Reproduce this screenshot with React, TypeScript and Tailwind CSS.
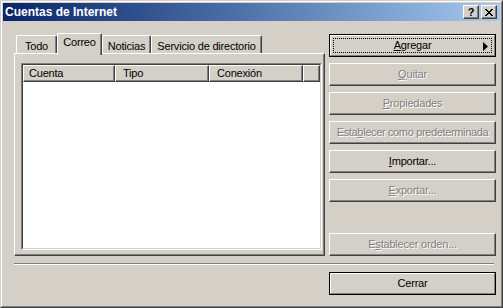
import React from "react";

const raised =
  "border border-t-white border-l-white border-r-[#404040] border-b-[#404040] shadow-[inset_-1px_-1px_0_#808080]";

function Btn({
  children,
  disabled,
  isDefault,
  focus,
  arrow,
  className = "",
}: {
  children: React.ReactNode;
  disabled?: boolean;
  isDefault?: boolean;
  focus?: boolean;
  arrow?: boolean;
  className?: string;
}) {
  const text = disabled
    ? "text-[#808080] [text-shadow:1px_1px_0_#ffffff]"
    : "text-black";
  const inner = (
    <div
      className={`relative h-full w-full flex items-center justify-center bg-[#d4d0c8] ${
        isDefault
          ? "border border-t-white border-l-white border-r-[#808080] border-b-[#808080]"
          : raised
      } ${text}`}
    >
      {focus && (
        <div className="absolute inset-[2px] border border-dotted border-black" />
      )}
      <span className="leading-none whitespace-nowrap">{children}</span>
      {arrow && (
        <svg
          className="absolute right-[6px] top-[6px]"
          width="5"
          height="9"
          viewBox="0 0 5 9"
        >
          <polygon points="0,0 5,4.5 0,9" fill="#000" />
        </svg>
      )}
    </div>
  );
  return (
    <div
      className={`h-[23px] w-[167px] ${
        isDefault ? "border border-black" : ""
      } ${className}`}
    >
      {inner}
    </div>
  );
}

function Tab({
  label,
  w,
  selected,
  className = "",
}: {
  label: string;
  w: string;
  selected?: boolean;
  className?: string;
}) {
  return (
    <div
      className={`${w} ${
        selected
          ? "h-[22px] mb-[-2px] relative z-10 pt-[3px]"
          : "h-[18px] pt-[5px]"
      } bg-[#d4d0c8] border-t border-l border-t-white border-l-white border-r border-r-[#404040] shadow-[inset_-1px_0_0_#808080] rounded-tl-[2px] rounded-tr-[2px] flex justify-center ${className}`}
    >
      <span className="leading-none whitespace-nowrap">{label}</span>
    </div>
  );
}

export default function App() {
  return (
    <div className="w-[503px] h-[308px] bg-[#d4d0c8] border border-t-[#d4d0c8] border-l-[#d4d0c8] border-r-[#404040] border-b-[#404040] font-['Liberation_Sans',Arial,sans-serif] text-[11px] tracking-[-0.2px] text-black select-none">
      <div className="h-full border border-t-white border-l-white border-r-[#808080] border-b-[#808080] p-[1px] flex flex-col">
        {/* title bar */}
        <div className="h-[18px] bg-linear-to-r from-[#0a246a] to-[#a6caf0] flex items-center justify-between pl-[2px] pr-[3px]">
          <span className="text-white font-bold text-[12px] tracking-normal leading-none">
            Cuentas de Internet
          </span>
          <div className="flex gap-[2px]">
            <div className={`w-[16px] h-[14px] bg-[#d4d0c8] ${raised} flex items-center justify-center`}>
              <span className="font-bold text-[11px] leading-none text-black">?</span>
            </div>
            <div className={`w-[16px] h-[14px] bg-[#d4d0c8] ${raised} flex items-center justify-center`}>
              <svg width="8" height="7" viewBox="0 0 8 7">
                <path
                  d="M0 0h2v1H0zM6 0h2v1H6zM1 1h2v1H1zM5 1h2v1H5zM2 2h4v1H2zM3 3h2v1H3zM2 4h4v1H2zM1 5h2v1H1zM5 5h2v1H5zM0 6h2v1H0zM6 6h2v1H6z"
                  fill="#000"
                />
              </svg>
            </div>
          </div>
        </div>

        {/* body */}
        <div className="flex-1 flex flex-col">
          <div className="flex pl-[11px] pt-[12px]">
            {/* left: tabs + panel */}
            <div className="w-[311px] flex flex-col">
              <div className="h-[20px] flex items-end">
                <Tab label="Todo" w="w-[41px]" className="ml-[2px]" />
                <Tab label="Correo" w="w-[45px]" selected />
                <Tab label="Noticias" w="w-[49px]" />
                <Tab label="Servicio de directorio" w="w-[111px]" />
              </div>
              <div className="h-[203px] border border-t-white border-l-white border-r-[#404040] border-b-[#404040] shadow-[inset_-1px_-1px_0_#808080] pl-[6px] pt-[9px]">
                {/* list view */}
                <div className="w-[301px] h-[187px] border border-t-[#808080] border-l-[#808080] border-r-white border-b-white">
                  <div className="h-full border border-t-[#404040] border-l-[#404040] border-r-[#d4d0c8] border-b-[#d4d0c8] bg-white flex flex-col">
                    <div className="h-[17px] flex bg-[#d4d0c8]">
                      <div className={`w-[92px] h-full ${raised} pl-[5px] flex items-center`}>
                        <span className="leading-none">Cuenta</span>
                      </div>
                      <div className={`w-[94px] h-full ${raised} pl-[7px] flex items-center`}>
                        <span className="leading-none">Tipo</span>
                      </div>
                      <div className={`w-[94px] h-full ${raised} pl-[7px] flex items-center`}>
                        <span className="leading-none">Conexión</span>
                      </div>
                      <div className={`flex-1 h-full ${raised}`} />
                    </div>
                    <div className="flex-1 bg-white" />
                  </div>
                </div>
              </div>
            </div>

            {/* right: buttons */}
            <div className="ml-[4px] mt-[1px] flex flex-col gap-[6px]">
              <Btn isDefault focus arrow>
                <u>A</u>gregar
              </Btn>
              <Btn disabled>
                <u>Q</u>uitar
              </Btn>
              <Btn disabled>
                <u>P</u>ropiedades
              </Btn>
              <Btn disabled>
                <span className="tracking-[-0.35px]">
                  Esta<u>b</u>lecer como predeterminada
                </span>
              </Btn>
              <Btn>
                <u>I</u>mportar...
              </Btn>
              <Btn disabled>
                <u>E</u>xportar...
              </Btn>
              <Btn disabled className="mt-[25px]">
                E<u>s</u>tablecer orden...
              </Btn>
            </div>
          </div>

          {/* separator */}
          <div className="ml-[11px] mt-[7px] w-[480px] h-[2px] border-t border-t-[#808080] border-b border-b-white" />

          <div className="mt-[7px] pl-[326px]">
            <Btn isDefault>Cerrar</Btn>
          </div>
        </div>
      </div>
    </div>
  );
}
